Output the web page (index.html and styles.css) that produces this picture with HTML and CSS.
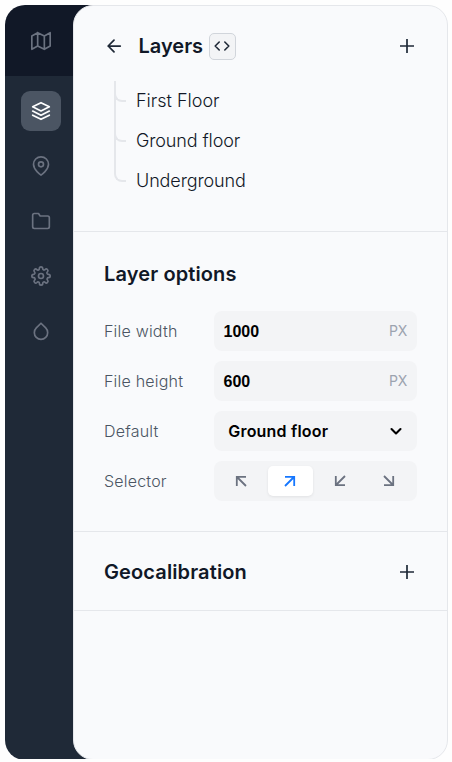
FILE: index.html
```html
<!DOCTYPE html>
<html lang="en">
<head>
<meta charset="utf-8">
<title>Layers</title>
<link rel="stylesheet" href="styles.css">
</head>
<body>
<div class="viewport">
<div class="app">
  <nav class="rail">
    <div class="brand">
      <svg class="icon" viewBox="0 0 24 24"><path d="M1 6v16l7-4 8 4 7-4V2l-7 4-8-4zM8 2v16M16 6v16"/></svg>
    </div>
    <div class="tools">
      <button class="tool active" aria-label="Layers"><svg class="icon" viewBox="0 0 24 24"><path d="M12 2 2 7l10 5 10-5zM2 17l10 5 10-5M2 12l10 5 10-5"/></svg></button>
      <button class="tool" aria-label="Locations"><svg class="icon" viewBox="0 0 24 24"><path d="M21 10c0 7-9 13-9 13s-9-6-9-13a9 9 0 0 1 18 0z"/><circle cx="12" cy="10" r="3"/></svg></button>
      <button class="tool" aria-label="Groups"><svg class="icon" viewBox="0 0 24 24"><path d="M22 19a2 2 0 0 1-2 2H4a2 2 0 0 1-2-2V5a2 2 0 0 1 2-2h5l2 3h9a2 2 0 0 1 2 2z"/></svg></button>
      <button class="tool" aria-label="Settings"><svg class="icon" viewBox="0 0 24 24"><circle cx="12" cy="12" r="3"/><path d="M19.4 15a1.65 1.65 0 0 0 .33 1.82l.06.06a2 2 0 0 1-2.83 2.83l-.06-.06a1.65 1.65 0 0 0-2.8 1.17V21a2 2 0 0 1-4 0v-.09A1.65 1.65 0 0 0 7.18 19.73l-.06.06a2 2 0 0 1-2.83-2.83l.06-.06A1.65 1.65 0 0 0 3.09 14H3a2 2 0 0 1 0-4h.09A1.65 1.65 0 0 0 4.27 7.18l-.06-.06a2 2 0 0 1 2.83-2.83l.06.06A1.65 1.65 0 0 0 10 3.09V3a2 2 0 0 1 4 0v.09a1.65 1.65 0 0 0 2.82 1.18l.06-.06a2 2 0 0 1 2.83 2.83l-.06.06A1.65 1.65 0 0 0 20.91 10H21a2 2 0 0 1 0 4h-.09a1.65 1.65 0 0 0-1.51 1z"/></svg></button>
      <button class="tool" aria-label="Style"><svg class="icon" viewBox="0 0 24 24"><path d="m12 2.69 5.66 5.66a8 8 0 1 1-11.31 0z"/></svg></button>
    </div>
  </nav>
  <main class="panel">
    <section class="section layers">
      <header class="heading">
        <svg class="icon dark back" viewBox="0 0 24 24"><path d="M19.5 12H5M12 19l-7-7 7-7"/></svg>
        <h2 class="title">Layers</h2>
        <button class="code" aria-label="Code"><svg class="icon-code" viewBox="0 0 16 16"><path d="m5.2 4-4 4 4 4M10.8 4l4 4-4 4"/></svg></button>
        <svg class="icon dark plus" viewBox="0 0 20 20"><path d="M10 3v14M3 10h14"/></svg>
      </header>
      <ul class="tree">
        <li class="leaf"><span class="branch"></span><span class="name">First Floor</span></li>
        <li class="leaf"><span class="branch"></span><span class="name">Ground floor</span></li>
        <li class="leaf"><span class="branch"></span><span class="name">Underground</span></li>
      </ul>
    </section>
    <section class="section options">
      <h2 class="title">Layer options</h2>
      <div class="fields">
        <div class="row"><span class="label">File width</span><div class="field"><span class="number">1000</span><span class="unit">PX</span></div></div>
        <div class="row"><span class="label">File height</span><div class="field"><span class="number">600</span><span class="unit">PX</span></div></div>
        <div class="row"><span class="label">Default</span><div class="field select"><span>Ground floor</span><svg class="chevron" viewBox="0 0 16 16"><path d="m3.5 6 4.5 4.5L12.500 6"/></svg></div></div>
        <div class="row"><span class="label">Selector</span>
          <div class="segments">
            <span class="segment"><svg class="arrow" viewBox="0 0 16 16"><path d="M13 13 4 4M3.8 13V3.8H13"/></svg></span>
            <span class="segment chosen"><svg class="arrow" viewBox="0 0 16 16"><path d="m3 13 9-9M3 3.8h9.2V13"/></svg></span>
            <span class="segment"><svg class="arrow" viewBox="0 0 16 16"><path d="m13 3-9 9M3.8 3v9.2H13"/></svg></span>
            <span class="segment"><svg class="arrow" viewBox="0 0 16 16"><path d="m3 3 9 9M12.2 3v9.2H3"/></svg></span>
          </div>
        </div>
      </div>
    </section>
    <section class="section geo">
      <h2 class="title">Geocalibration</h2>
      <svg class="icon dark plus" viewBox="0 0 20 20"><path d="M10 3v14M3 10h14"/></svg>
    </section>
  </main>
</div>
</div>
</body>
</html>
```
FILE: styles.css
```css
* { box-sizing: border-box; }
body { margin: 0; height: 762px; padding: 5px 4px 3px 5px; overflow: hidden; background: #fefefe; font-family: Inter, "Liberation Sans", sans-serif; color: #111827; }
h2, ul { margin: 0; padding: 0; }
button { padding: 0; border: 0; background: none; }
.viewport { width: 443px; height: 754px; overflow: hidden; }
.app { display: flex; height: 755px; border-radius: 20px 0 0 20px; background: linear-gradient(#111827 71px, #1f2937 71px) 0 0 / 100px 100% no-repeat; }
.rail { width: 68px; flex: none; color: #6b7280; }
.brand { height: 71px; padding-left: 4px; display: flex; align-items: center; justify-content: center; }
.tools { padding: 15px 0 0 16px; display: flex; flex-direction: column; gap: 15px; }
.tool { width: 40px; height: 40px; display: flex; align-items: center; justify-content: center; border-radius: 9px; color: inherit; }
.tool.active { background: #4b5563; color: #fff; }
.icon { width: 20px; height: 20px; display: block; flex: none; }
svg { fill: none; stroke: currentColor; stroke-width: 2; stroke-linecap: round; stroke-linejoin: round; }
.panel { flex: 1; border: 1px solid #e5e7eb; border-radius: 20px; background: #f9fafc; }
.section { border-bottom: 1px solid #e5e7eb; padding: 0 30px; }
.title { font-size: 20px; line-height: 30px; font-weight: 600; letter-spacing: 0.12px; }
.dark { color: #1f2937; stroke-width: 2.1; }
.plus { margin-left: auto; stroke-width: 1.7; stroke-linecap: butt; }
.layers { height: 226px; padding-top: 20px; }
.heading { height: 40px; display: flex; align-items: center; }
.heading .title { margin: 0 6px 0 14.5px; letter-spacing: 0; }
.code { width: 27px; height: 27px; margin-left: -0.5px; border: 1px solid #d1d5db; border-radius: 5px; background: #f3f4f6; color: #1f2937; display: flex; align-items: center; justify-content: center; }
.icon-code { width: 16px; height: 16px; stroke-width: 1.6; }
.tree { list-style: none; padding: 15px 0 0 10px; }
.leaf { height: 40px; display: flex; align-items: center; font-size: 18px; font-weight: 300; letter-spacing: -0.12px; position: relative; padding-left: 22px; }
.leaf:first-child { letter-spacing: 0; }
.name { padding-bottom: 1px; }
.branch { position: absolute; left: 0; top: 0; width: 12px; height: 21px; border: solid #e5e7eb; border-width: 0 0 2px 2px; border-bottom-left-radius: 8px; }
.leaf:not(:last-child)::before { content: ""; position: absolute; left: 0; top: 0; width: 2px; height: 40px; background: #e5e7eb; }
.options { height: 300px; padding-top: 27px; }
.fields { display: grid; gap: 10px; padding-top: 22px; }
.row { display: grid; grid-template-columns: 110px 203px; align-items: center; }
.label { font-size: 16px; font-weight: 300; letter-spacing: 0.2px; color: #4b5563; }
.field, .segments { height: 40px; border-radius: 8px; background: #f3f4f6; display: flex; align-items: center; }
.field { justify-content: space-between; padding: 0 10px 0 9.5px; font-size: 16px; font-weight: 600; color: #000; }
.number { font-family: "Liberation Sans", sans-serif; font-weight: 700; padding-top: 2px; }
.unit { font-size: 14px; font-weight: 400; letter-spacing: -0.2px; color: #9ca3af; padding-bottom: 1px; }
.select { padding: 0 13px 0 14.3px; letter-spacing: 0.2px; }
.chevron { width: 16px; height: 16px; stroke-width: 2.1; }
.segments { padding: 5px; justify-content: space-between; color: #6b7280; }
.segment { width: 45px; height: 30px; display: flex; align-items: center; justify-content: center; border-radius: 5px; }
.chosen { background: #fff; color: #1677ff; box-shadow: 0 1px 3px rgb(0 0 0 / 8%); }
.arrow { width: 16px; height: 16px; margin-right: 1px; stroke-width: 1.8; stroke-linecap: butt; stroke-linejoin: miter; }
.geo { height: 79px; padding-top: 2px; display: flex; align-items: center; }
```
